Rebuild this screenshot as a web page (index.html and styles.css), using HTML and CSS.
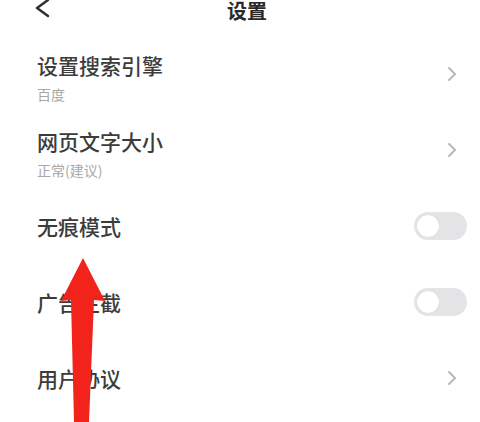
FILE: index.html
```html
<!DOCTYPE html>
<html lang="zh-CN">
<head>
<meta charset="utf-8">
<link rel="stylesheet" href="styles.css">
</head>
<body>
<div class="page">
  <header class="header">
    <svg class="back" width="16" height="20" viewBox="0 0 16 20"><polyline points="13,1 2,9 13,17" fill="none" stroke="#2e2e2e" stroke-width="2.4" stroke-linecap="round" stroke-linejoin="round"/></svg>
    <div class="title">设置</div>
  </header>
  <div class="list">
    <div class="row">
      <div class="texts">
        <div class="label">设置搜索引擎</div>
        <div class="sub">百度</div>
      </div>
      <svg class="chev" width="10" height="16" viewBox="0 0 10 16"><polyline points="2,2 8,8 2,14" fill="none" stroke="#b8b8b8" stroke-width="2" stroke-linecap="round" stroke-linejoin="round"/></svg>
    </div>
    <div class="row">
      <div class="texts">
        <div class="label">网页文字大小</div>
        <div class="sub">正常(建议)</div>
      </div>
      <svg class="chev" width="10" height="16" viewBox="0 0 10 16"><polyline points="2,2 8,8 2,14" fill="none" stroke="#b8b8b8" stroke-width="2" stroke-linecap="round" stroke-linejoin="round"/></svg>
    </div>
    <div class="row">
      <div class="label">无痕模式</div>
      <div class="toggle"><div class="knob"></div></div>
    </div>
    <div class="row">
      <div class="label">广告拦截</div>
      <div class="toggle"><div class="knob"></div></div>
    </div>
    <div class="row">
      <div class="label">用户协议</div>
      <svg class="chev" width="10" height="16" viewBox="0 0 10 16"><polyline points="2,2 8,8 2,14" fill="none" stroke="#b8b8b8" stroke-width="2" stroke-linecap="round" stroke-linejoin="round"/></svg>
    </div>
  </div>
  <svg class="arrow" width="480" height="422" viewBox="0 0 480 422"><polygon points="83,258 105,301 94,300 89,422 74,422 71,300 61,301" fill="#f2231b"/></svg>
</div>
</body>
</html>
```
FILE: styles.css
```css
html, body {
  margin: 0;
  padding: 0;
  background: #ffffff;
}
.page {
  position: relative;
  width: 480px;
  height: 422px;
  overflow: hidden;
  font-family: "Noto Sans CJK SC", "Noto Sans", sans-serif;
  color: #3a3a3a;
}
.header {
  height: 36px;
  display: flex;
  align-items: flex-start;
  padding-left: 35px;
  position: relative;
}
.back {
  display: block;
  margin-top: -1px;
}
.title {
  position: absolute;
  left: 0;
  right: 0;
  top: 0;
  text-align: center;
  font-size: 20px;
  line-height: 21px;
  font-weight: 700;
  color: #2a2a2a;
  padding-left: 14px;
}
.list {
  display: flex;
  flex-direction: column;
}
.row {
  height: 76px;
  display: flex;
  align-items: center;
  justify-content: space-between;
  padding: 0 13px 0 37px;
}
.texts {
  display: flex;
  flex-direction: column;
  padding-top: 5px;
}
.label {
  font-size: 21px;
  line-height: 26px;
  font-weight: 500;
  color: #3c3c3c;
}
.sub {
  font-size: 14px;
  line-height: 16px;
  margin-top: 8px;
  color: #a8a8a8;
}
.chev {
  display: block;
  margin-right: 10px;
}
.toggle {
  width: 53px;
  height: 28px;
  border-radius: 14px;
  background: #e4e4e7;
  display: flex;
  align-items: center;
  padding-left: 3px;
  box-sizing: border-box;
}
.knob {
  width: 22px;
  height: 22px;
  border-radius: 50%;
  background: #ffffff;
  box-shadow: 0 0 1px rgba(0,0,0,0.15);
}
.arrow {
  position: absolute;
  left: 0;
  top: 0;
}
```
